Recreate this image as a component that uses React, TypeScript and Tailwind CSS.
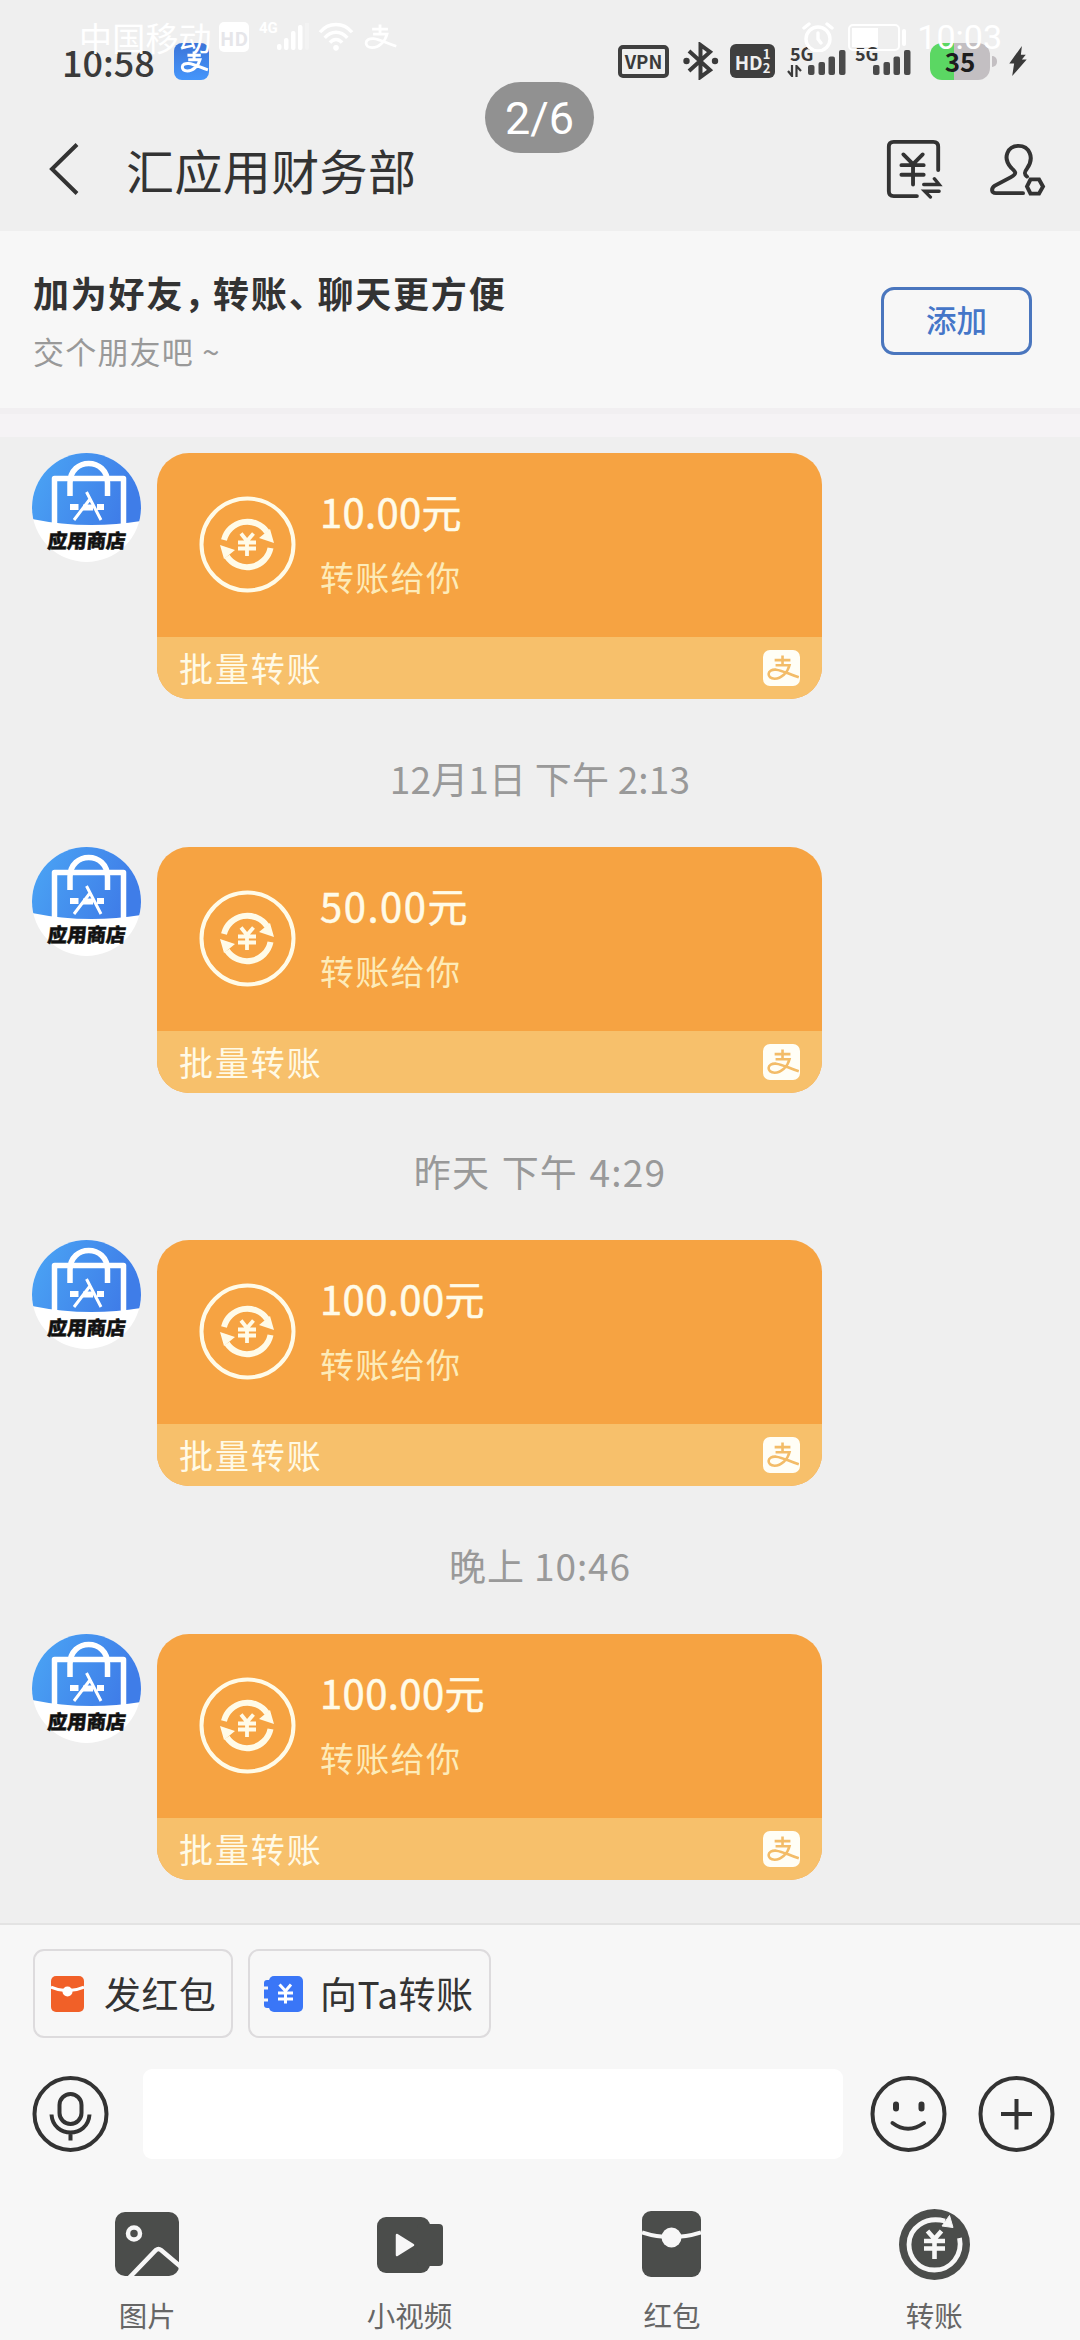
import React from 'react';

type Message = {
  id: number;
  amount: string;
  amountClass: string;
  time?: string;
  timeClass?: string;
};

const messages: Message[] = [
  { id: 1, amount: '10.00元', amountClass: 'tracking-[0.3px]' },
  { id: 2, amount: '50.00元', amountClass: 'tracking-[1.5px]', time: '12月1日 下午 2:13', timeClass: 'h-[148px] tracking-[0.2px]' },
  { id: 3, amount: '100.00元', amountClass: 'tracking-[0.4px]', time: '昨天 下午 4:29', timeClass: 'h-[147px] tracking-[1.2px] [word-spacing:2px]' },
  { id: 4, amount: '100.00元', amountClass: 'tracking-[0.4px]', time: '晚上 10:46', timeClass: 'h-[148px] tracking-[0.9px]' },
];

const AlipayMark = ({ className, strokeWidth = 3 }: { className?: string; strokeWidth?: number }) => (
  <svg viewBox="0 0 34 28" className={className} fill="none" stroke="currentColor" strokeWidth={strokeWidth}>
    <path d="M8 5.5H25M16.5 0.5V11M9 11H24C22 19 15 25.5 8 25.5C3.5 25.5 1.5 23 1.5 20.5C1.5 17 5 15.5 9.5 15.8C17 16.5 24 21 34 24" />
  </svg>
);

const Bars = ({ className }: { className?: string }) => (
  <svg width="38" height="25" viewBox="0 0 38 25" className={className} fill="#4a4a4a">
    <rect x="0" y="15" width="6.5" height="10" rx="2" />
    <rect x="10.5" y="12" width="6.5" height="13" rx="2" />
    <rect x="20.5" y="6.5" width="6.5" height="18.5" rx="2" />
    <rect x="31" y="0" width="6.5" height="25" rx="2" />
  </svg>
);

// White system bar that floats over the whole screen
function OverlayStatus() {
  return (
    <div className="absolute inset-x-0 top-0 z-10 flex h-[74px] items-center pl-[79px] pr-[78px] text-white">
      <span className="w-[132px] whitespace-nowrap text-[33px] leading-none tracking-[0.2px]">中国移动</span>
      <span className="ml-[8px] flex h-[30px] w-[30px] items-center justify-center rounded-[5px] bg-white text-[19px] font-bold leading-none text-[#e6e6ea]">HD</span>
      <span className="ml-[10px] mb-[18px] w-[17px] font-['Roboto',sans-serif] text-[15px] font-bold leading-none">4G</span>
      <svg width="34" height="28" viewBox="0 0 34 28" className="ml-[1px]" fill="currentColor">
        <rect x="0" y="21" width="4.5" height="6" rx="2" />
        <rect x="7" y="15" width="4.5" height="12" rx="2" />
        <rect x="14" y="8" width="4.5" height="19" rx="2" />
        <rect x="21" y="2" width="4.5" height="25" rx="2" />
        <rect x="28" y="-4" width="4" height="31" rx="2" opacity=".25" />
      </svg>
      <svg width="38" height="32" viewBox="0 0 38 34" className="ml-[6px]" fill="none" stroke="currentColor" strokeWidth="3.6">
        <path d="M2 12C11 1 27 1 36 12M7 18C14 10 24 10 31 18M12.5 23C16 18.5 22 18.5 25.5 23" />
        <circle cx="19" cy="28.5" r="3" fill="currentColor" stroke="none" />
      </svg>
      <AlipayMark className="ml-[9px] h-[26px] w-[33px]" />
      <div className="ml-auto flex items-center">
        <svg width="32" height="30" viewBox="0 0 32 30" fill="none" stroke="currentColor" strokeWidth="3.4" strokeLinecap="round">
          <circle cx="16" cy="17" r="12" />
          <path d="M2 6L7 2M30 6L25 2M16 11V17L19 21" />
        </svg>
        <div className="ml-[14px] h-[27px] w-[52px] rounded-[5px] border-2 border-white p-[2px]">
          <div className="h-full w-[26px] bg-white" />
        </div>
        <div className="ml-[2px] h-[17px] w-[4px] rounded-full bg-white" />
        <span className="ml-[11px] font-['Roboto',sans-serif] text-[34px] leading-none">10:03</span>
      </div>
    </div>
  );
}

function PhoneStatus() {
  return (
    <div className="flex h-[122px] items-center pl-[62px] text-[#3a3a3a]">
      <span className="-mt-[1px] w-[112px] text-[36px] font-medium leading-none">10:58</span>
      <div className="flex h-[37px] w-[35px] items-end justify-end overflow-hidden rounded-[8px] bg-gradient-to-b from-[#3c74d8] to-[#4596fb] pb-[7px] text-white">
        <AlipayMark className="h-[22px] w-[29px]" strokeWidth={3.8} />
      </div>
      <div className="ml-[409px] flex items-center">
        <span className="flex h-[33px] w-[51px] items-center justify-center rounded-[5px] border-[4px] border-[#3f3f3f] text-[18.5px] font-bold leading-none">VPN</span>
        <svg width="36" height="38" viewBox="0 1 36 38" className="ml-[14px]" fill="none" stroke="currentColor" strokeWidth="4">
          <path d="M6 10L27 29L17.500 36V4L27 11L6 30" />
          <circle cx="3.5" cy="20" r="3.2" fill="currentColor" stroke="none" />
          <circle cx="32" cy="20" r="3.2" fill="currentColor" stroke="none" />
        </svg>
        <div className="ml-[11px] flex h-[34px] w-[45px] items-center justify-center rounded-[6px] bg-[#3f3f3f] text-[#f0f0f0]">
          <span className="text-[19px] font-bold leading-none">HD</span>
          <span className="flex flex-col text-[13px] font-bold leading-[14px]">
            <span>1</span>
            <span>2</span>
          </span>
        </div>
        <div className="relative ml-[12px] h-[31px] w-[60px]">
          <span className="absolute -top-[2px] left-[3px] text-[18px] font-bold leading-none">5G</span>
          <svg width="15" height="12" viewBox="0 0 15 12" className="absolute bottom-0 left-0" fill="none" stroke="currentColor" strokeWidth="2.2">
            <path d="M1 6L5 11V0M14 6L9.500 1V12" />
          </svg>
          <Bars className="absolute left-[21px] top-[4px]" />
        </div>
        <div className="relative ml-[5px] h-[31px] w-[60px]">
          <span className="absolute -top-[2px] left-[3px] text-[18px] font-bold leading-none">5G</span>
          <Bars className="absolute left-[21px] top-[4px]" />
        </div>
        <div className="ml-[18px] flex h-[37px] w-[60px] items-center justify-center rounded-[12px] bg-[linear-gradient(90deg,#5bd763_0_24px,#c3bfc2_24px)] text-[26px] font-bold leading-none text-[#1d1d1d]">35</div>
        <div className="ml-[2px] h-[11px] w-[5px] rounded-r-full bg-[#c3bfc2]" />
        <svg width="18" height="30" viewBox="0 0 18 31" className="ml-[12px]" fill="currentColor">
          <path d="M13 0L0 18H5L3 31L18 14H13L17 9H12Z" />
        </svg>
      </div>
    </div>
  );
}

function TitleBar() {
  return (
    <div className="flex h-[109px] items-center pb-[15px] pl-[48px] text-[#333]">
      <svg width="34" height="52" viewBox="0 0 34 52" fill="none" stroke="currentColor" strokeWidth="4">
        <path d="M29 1.500L4 26L29 50.500" />
      </svg>
      <h1 className="ml-[44px] w-[292px] whitespace-nowrap text-[48px] leading-none tracking-[0.4px]">汇应用财务部</h1>
      <svg width="58" height="60" viewBox="0 0 58 62" className="ml-[467px]" fill="none" stroke="currentColor" strokeWidth="4" strokeLinecap="round">
        <path d="M32 59H8Q3 59 3 54V8Q3 3 8 3H49Q54 3 54 8V32" />
        <path d="M18 16L28 26L38 16M16 27H39M16 37H39M28 27V47" />
        <path d="M39 47H55L50 41M55 54H40L46 60" strokeWidth="3.4" />
      </svg>
      <svg width="56" height="53" viewBox="0 0 56 56" preserveAspectRatio="none" className="ml-[47px]" fill="none" stroke="currentColor" strokeWidth="4" strokeLinecap="round">
        <path d="M33 53H6C1 53 1 48 5 45L21 36C28 32 25 30 21 26C12 15 18 3 28.500 3C39 3 45 15 37 27C34 31 34 33 37 35.500" />
        <path d="M40.500 38.500H49L53 46L49 53.500H40.500L37 46Z" />
      </svg>
    </div>
  );
}

function FriendBanner() {
  return (
    <div className="flex h-[177px] items-center justify-between bg-[#f7f7f7] pl-[33px] pr-[48px]">
      <div>
        <p className="text-[36px] font-bold leading-[50px] tracking-[1.8px] text-[#333]">
          加为好友<span className="mr-[9px] [font-feature-settings:'halt']">，</span>转账<span className="mr-[9px] [font-feature-settings:'halt']">、</span>聊天更方便
        </p>
        <p className="mt-[12px] text-[31px] leading-[44px] tracking-[1.2px] text-[#999]">交个朋友吧 ~</p>
      </div>
      <button className="mt-[2px] h-[68px] w-[151px] rounded-[13px] border-[3px] border-[#4a76be] pb-[2px] text-[30.5px] font-medium leading-none text-[#4576c8]">添加</button>
    </div>
  );
}

function Avatar() {
  return (
    <svg width="109" height="109" viewBox="0 0 109 109" className="ml-[32px] shrink-0">
      <defs>
        <clipPath id="face">
          <circle cx="54.5" cy="54.5" r="54.5" />
        </clipPath>
        <linearGradient id="sky" x1="0" y1="0" x2="1" y2=".3">
          <stop offset="0" stopColor="#4ba6f5" />
          <stop offset="1" stopColor="#3f7de8" />
        </linearGradient>
      </defs>
      <g clipPath="url(#face)">
        <rect width="109" height="109" fill="#fff" />
        <path d="M0 0H109V68Q54 77 0 66Z" fill="url(#sky)" />
        <path d="M22.500 74V25.500H91.500V74" fill="none" stroke="#fff" strokeWidth="5.5" strokeLinejoin="round" />
        <path d="M38 43V30C38 4 75.500 4 75.500 30V43" fill="none" stroke="#fff" strokeWidth="5.5" />
        <path d="M54.500 39L69 67M58 46L42 67" fill="none" stroke="#fff" strokeWidth="3" />
        <path d="M38 54H46.500M51 54.500H61M65 54H72" stroke="#fff" strokeWidth="6" />
      </g>
      <text x="55" y="95" textAnchor="middle" fontSize="19.5" fontWeight="900" fill="#111" stroke="#111" strokeWidth=".5" transform="skewX(-6) translate(9 0)">应用商店</text>
    </svg>
  );
}

function TransferCard({ amount, amountClass }: { amount: string; amountClass: string }) {
  return (
    <div className="ml-[16px] flex h-[246px] w-[665px] flex-col overflow-hidden rounded-[32px] bg-[#f6a342]">
      <div className="flex h-[184px] pl-[42px] pt-[43px]">
        <svg width="97" height="97" viewBox="0 0 97 97" fill="none" stroke="#fffbe8">
          <circle cx="48.5" cy="48.5" r="46" strokeWidth="4" />
          <path d="M25 44A24 24 0 0 1 68 36M71.500 52A24 24 0 0 1 28 60.500" strokeWidth="6" />
          <path d="M75 47L60 42L71 33ZM21 49L36 54L25 63Z" fill="#fffbe8" stroke="none" />
          <path d="M42 37.500L48 45L54.500 37.500M39 46.500H57M39 52.500H57M48 45V60" strokeWidth="3.8" />
        </svg>
        <div className="ml-[24px]">
          <p className={`-mt-[13px] text-[40px] leading-[56px] text-[#fffbe8] [-webkit-text-stroke:0.5px_#fffbe8] ${amountClass}`}>{amount}</p>
          <p className="mt-[13px] text-[34px] leading-[50px] tracking-[1.3px] text-[#fdebb8]">转账给你</p>
        </div>
      </div>
      <div className="flex flex-1 items-center justify-between bg-[#f7c06b] pl-[22px] pr-[22px]">
        <span className="text-[34px] leading-none tracking-[1.9px] text-[#fffae6]">批量转账</span>
        <div className="mb-[1px] flex h-[36px] w-[37px] items-center justify-end overflow-hidden rounded-[7px] bg-[#fffef6] text-[#f3bc68]">
          <AlipayMark className="h-[26px] w-[34px]" strokeWidth={2.8} />
        </div>
      </div>
    </div>
  );
}

const RedPacketIcon = () => (
  <svg width="33" height="36" viewBox="0 0 33 36">
    <rect width="33" height="36" rx="5" fill="#f16028" />
    <path d="M0 11Q16 18.500 33 11" fill="none" stroke="#fff" strokeWidth="3" />
    <circle cx="16.5" cy="15.5" r="5" fill="#fff" />
  </svg>
);

const YenBookIcon = () => (
  <svg width="39" height="36" viewBox="0 0 39 36">
    <rect x="5" width="34" height="36" rx="5" fill="#3a76f7" />
    <rect y="4" width="8" height="28" rx="3" fill="#3a76f7" />
    <path d="M0 12H4M0 24H4" stroke="#f7f7f7" strokeWidth="3" />
    <path d="M15.500 8.500L21.500 15L27 8.500M14 17H29M14 23H29M21.500 15V27.500" fill="none" stroke="#fff" strokeWidth="3" />
  </svg>
);

function QuickActions() {
  return (
    <div className="flex gap-[15px] pl-[33px] pt-[24px] text-[#333]">
      <button className="flex h-[89px] w-[200px] items-center rounded-[11px] border-2 border-[#dddbdd] pl-[16px]">
        <RedPacketIcon />
        <span className="-mt-[1px] ml-[20px] whitespace-nowrap text-[37px] leading-none tracking-[0.4px]">发红包</span>
      </button>
      <button className="flex h-[89px] w-[243px] items-center rounded-[11px] border-2 border-[#dddbdd] pl-[14px]">
        <YenBookIcon />
        <span className="-mt-[1px] ml-[17px] whitespace-nowrap text-[37px] leading-none tracking-[0.5px]">向Ta转账</span>
      </button>
    </div>
  );
}

function InputRow() {
  return (
    <div className="mt-[31px] flex h-[90px] items-center pl-[32px] text-[#333]">
      <svg width="77" height="76" viewBox="0 0 77 76" fill="none" stroke="currentColor" strokeWidth="4">
        <circle cx="38.5" cy="38" r="36" />
        <rect x="27.500" y="18" width="22" height="30" rx="11" />
        <path d="M19.500 38.500C21 62.500 56 62.500 57.500 38.500M38.500 56V64.500" />
      </svg>
      <div className="ml-[34px] h-[90px] w-[700px] rounded-[9px] bg-white" />
      <svg width="77" height="76" viewBox="0 0 77 76" className="ml-[27px]" fill="none" stroke="currentColor" strokeWidth="4" strokeLinecap="round">
        <circle cx="38.5" cy="38" r="36" />
        <path d="M26 28.500V32.500M51.500 28.500V32.500" strokeWidth="6" />
        <path d="M22.500 47Q38 58.500 54 47" />
      </svg>
      <svg width="77" height="76" viewBox="0 0 77 76" className="-mt-[1px] ml-[31px]" fill="none" stroke="currentColor" strokeWidth="4">
        <circle cx="38.5" cy="38" r="36" />
        <path d="M23 38H54M38.500 23V53.500" />
      </svg>
    </div>
  );
}

const tools = [
  {
    label: '图片',
    icon: (
      <svg width="64" height="71" viewBox="0 0 64 71">
        <rect y="3" width="64" height="64" rx="10" fill="#4b4d4b" />
        <circle cx="19" cy="24.5" r="6" fill="none" stroke="#f7f7f7" strokeWidth="4.5" />
        <path d="M14 69L41 41Q43.500 39 46 41L66 58" fill="none" stroke="#f7f7f7" strokeWidth="4.5" />
      </svg>
    ),
  },
  {
    label: '小视频',
    icon: (
      <svg width="66" height="71" viewBox="0 0 66 71">
        <rect y="8" width="53" height="56" rx="9" fill="#4b4d4b" />
        <rect x="40" y="15" width="26" height="42" rx="4" fill="#4b4d4b" />
        <path d="M20 26L36 36L20 46Z" fill="#f7f7f7" stroke="#f7f7f7" strokeWidth="2.5" strokeLinejoin="round" />
      </svg>
    ),
  },
  {
    label: '红包',
    icon: (
      <svg width="59" height="71" viewBox="0 0 59 71">
        <rect y="2" width="59" height="66" rx="9" fill="#4b4d4b" />
        <path d="M0 23.500Q29 33 59 23.500" fill="none" stroke="#f7f7f7" strokeWidth="4" />
        <circle cx="29.5" cy="28.5" r="10" fill="#f7f7f7" />
      </svg>
    ),
  },
  {
    label: '转账',
    icon: (
      <svg width="71" height="71" viewBox="0 0 71 71">
        <circle cx="35.5" cy="35.5" r="35.5" fill="#4b4d4b" />
        <path d="M60.500 29C64 46 52 61 35.500 61C20 61 10 49 10 35.500C10 19 26 7 46 12" fill="none" stroke="#f7f7f7" strokeWidth="4.8" />
        <path d="M50.500 6.500L54 18.500L43 17Z" fill="#f7f7f7" stroke="#f7f7f7" strokeLinejoin="round" />
        <path d="M28.500 22L35.500 30L42.500 22M25 32H46M25 39.500H46M35.500 30V50" fill="none" stroke="#f7f7f7" strokeWidth="4.6" />
      </svg>
    ),
  },
];

export default function App() {
  return (
    <div className="relative flex h-[2340px] w-[1080px] flex-col overflow-hidden bg-[#efefef] font-['Noto_Sans_CJK_SC',sans-serif]">
      <OverlayStatus />
      <div className="absolute left-[485px] top-[82px] z-10 flex h-[71px] w-[109px] items-center justify-center rounded-full bg-[#919191] pt-[2px] font-['Roboto',sans-serif] text-[45px] leading-none text-white">2/6</div>

      <PhoneStatus />
      <TitleBar />
      <FriendBanner />

      {/* Divider between the banner and the conversation */}
      <div className="h-[29px] border-t-[6px] border-[#f1eff1] bg-[#f5f3f5]" />

      <main className="h-[1486px] pt-[16px]">
        {messages.map((msg) => (
          <React.Fragment key={msg.id}>
            {msg.time && (
              <div className={`${msg.timeClass} flex items-center justify-center pt-[10px] text-[37px] leading-none text-[#999]`}>
                {msg.time}
              </div>
            )}
            <div className="flex items-start">
              <Avatar />
              <TransferCard amount={msg.amount} amountClass={msg.amountClass} />
            </div>
          </React.Fragment>
        ))}
      </main>

      <footer className="flex-1 border-t-2 border-[#e3e3e3] bg-[#f7f7f7]">
        <QuickActions />
        <InputRow />
        <div className="mt-[50px] flex pl-[16px]">
          {tools.map((tool) => (
            <div key={tool.label} className="flex w-[262.4px] flex-col items-center">
              {tool.icon}
              <span className="mt-[20px] text-[28.5px] leading-[30px] text-[#666]">{tool.label}</span>
            </div>
          ))}
        </div>
      </footer>
    </div>
  );
}
